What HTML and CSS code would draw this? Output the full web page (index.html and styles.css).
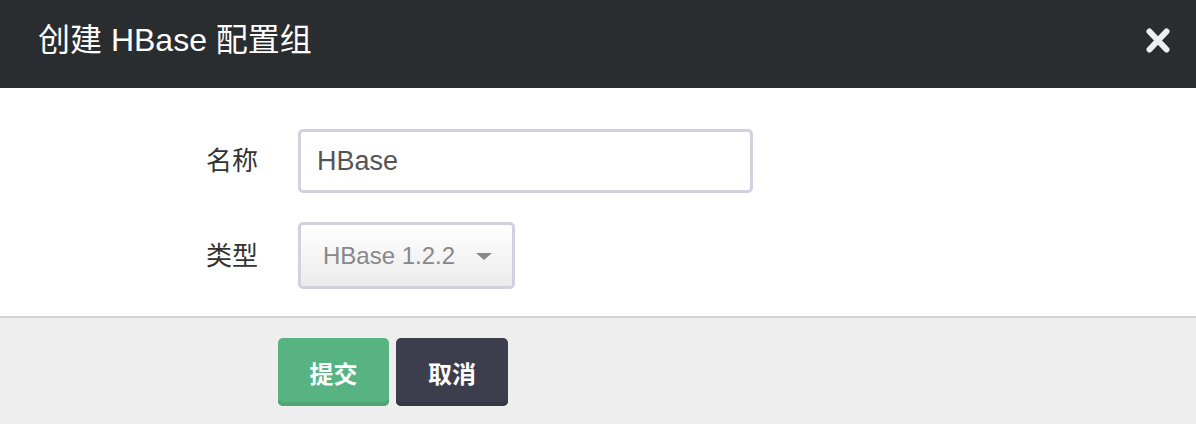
FILE: index.html
```html
<!DOCTYPE html>
<html lang="zh">
<head>
<meta charset="utf-8">
<title>创建 HBase 配置组</title>
<link rel="stylesheet" href="styles.css">
</head>
<body>
<div class="modal">
  <div class="modal-header">
    <h1 class="modal-title">创建 HBase 配置组</h1>
    <span class="close">
      <svg width="24" height="25" viewBox="0 0 24 25"><path d="M3.5 3.5 L20.5 21.5 M20.5 3.5 L3.5 21.5" stroke="#eeeeee" stroke-width="6" stroke-linecap="round" fill="none"/></svg>
    </span>
  </div>
  <div class="modal-body">
    <div class="form-row">
      <label class="form-label">名称</label>
      <div class="text-input">HBase</div>
    </div>
    <div class="form-row">
      <label class="form-label">类型</label>
      <div class="select">
        <span class="select-text">HBase 1.2.2</span>
        <span class="caret"></span>
      </div>
    </div>
  </div>
  <div class="modal-footer">
    <button class="btn btn-primary">提交</button>
    <button class="btn btn-dark">取消</button>
  </div>
</div>
</body>
</html>
```
FILE: styles.css
```css
* { box-sizing: border-box; }
html, body {
  margin: 0;
  padding: 0;
  background: #eeeeee;
  font-family: "Liberation Sans", "Noto Sans CJK SC", sans-serif;
}
.modal {
  width: 1196px;
  min-height: 424px;
  background: #eeeeee;
}
.modal-header {
  height: 88px;
  background: #2a2d2f;
  display: flex;
  align-items: center;
  justify-content: space-between;
  padding: 0 26px 8px 38px;
}
.modal-title {
  margin: 0;
  font-size: 32px;
  font-weight: normal;
  color: #ffffff;
  line-height: 1;
}
.close {
  display: flex;
  margin-top: 1px;
}
.modal-body {
  background: #ffffff;
  padding: 41px 0 27px 0;
  border-bottom: 2px solid #d3d0de;
  display: flex;
  flex-direction: column;
  gap: 29px;
}
.form-row {
  display: flex;
  align-items: center;
}
.form-label {
  width: 258px;
  text-align: right;
  padding-right: 0;
  margin-right: 40px;
  font-size: 26px;
  color: #333333;
  line-height: 1;
}
.text-input {
  width: 455px;
  height: 64px;
  border: 3px solid #d3d0e0;
  border-radius: 5px;
  padding: 0 16px;
  display: flex;
  align-items: center;
  font-size: 27px;
  color: #555555;
  background: #ffffff;
}
.select {
  width: 217px;
  height: 67px;
  border: 3px solid #d3d0e0;
  border-radius: 5px;
  background: linear-gradient(#ffffff, #ebebeb);
  display: flex;
  align-items: center;
  padding: 0 20px 0 22px;
  justify-content: space-between;
}
.select-text {
  font-size: 24px;
  color: #888888;
}
.caret {
  width: 0;
  height: 0;
  border-left: 8px solid transparent;
  border-right: 8px solid transparent;
  border-top: 7px solid #888888;
  margin-top: 2px;
}
.modal-footer {
  padding: 20px 0 0 278px;
  display: flex;
  gap: 7px;
}
.btn {
  height: 68px;
  border: none;
  border-radius: 5px;
  font-family: "Liberation Sans", "Noto Sans CJK SC", sans-serif;
  font-size: 24px;
  font-weight: bold;
  color: #ffffff;
  padding: 0;
}
.btn-primary {
  width: 111px;
  background: #57b382;
  box-shadow: inset 0 -4px 0 #4ea673;
}
.btn-dark {
  width: 112px;
  background: #3c3e4d;
  box-shadow: inset 0 -4px 0 #353745;
}
```
